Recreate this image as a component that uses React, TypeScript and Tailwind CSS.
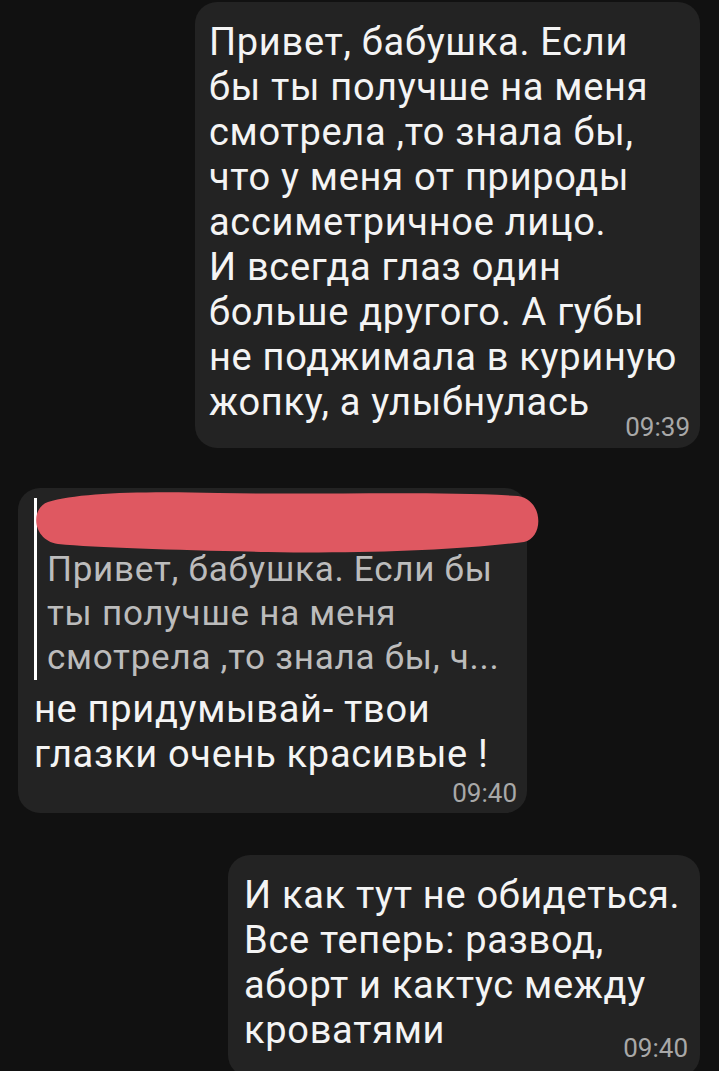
const Time = ({ value, className = "" }: { value: string; className?: string }) => (
  <div className={`flex justify-end ${className}`}>
    <span className="text-[26px] leading-[26px] text-[#a8a8a8]">{value}</span>
  </div>
);

const Lines = ({ lines, className }: { lines: string[]; className: string }) => (
  <div className={className}>
    {lines.map((l) => (
      <div key={l} className="whitespace-nowrap">
        {l}
      </div>
    ))}
  </div>
);

const App = () => {
  return (
    <div className="h-[1071px] overflow-hidden bg-[#111111] flex flex-col pt-[2px] font-['Roboto',sans-serif]">
      {/* outgoing message */}
      <div className="self-end mr-[19px] w-[505px] rounded-[22px] bg-[#232323] pl-[14px] pr-[10px] pt-[18px] pb-[8px]">
        <Lines
          className="text-[38px] leading-[45px] tracking-[0.7px] text-[#f4f4f4]"
          lines={[
            "Привет, бабушка. Если",
            "бы ты получше на меня",
            "смотрела ,то знала бы,",
            "что у меня от природы",
            "ассиметричное лицо.",
            "И всегда глаз один",
            "больше другого. А губы",
            "не поджимала в куриную",
            "жопку, а улыбнулась",
          ]}
        />
        <Time value="09:39" className="-mt-[11px]" />
      </div>

      {/* reply with quote */}
      <div className="relative mt-[40px] ml-[18px] w-[509px] rounded-[22px] bg-[#232323] pl-[16px] pr-[10px] pt-[10px] pb-[7px]">
        <div className="border-l-[3px] border-white pl-[10px]">
          <div className="h-[50px]" />
          <Lines
            className="text-[35px] leading-[44px] tracking-[0.75px] text-[#bcbcbc]"
            lines={["Привет, бабушка. Если бы", "ты получше на меня", "смотрела ,то знала бы, ч..."]}
          />
        </div>
        <Lines
          className="mt-[7px] text-[38px] leading-[45px] tracking-[0.7px] text-[#f4f4f4]"
          lines={["не придумывай- твои", "глазки очень красивые !"]}
        />
        <Time value="09:40" className="mt-[3px]" />

        {/* scribbled-out sender name */}
        <svg className="absolute left-0 top-0 overflow-visible" width="540" height="80" viewBox="0 0 540 80">
          <path
            d="M30 14 C60 5 120 3 200 5 C300 7 420 3 500 8 C526 12 526 50 506 54 C440 62 350 66 250 64 C160 62 80 60 40 56 C14 52 12 20 30 14 Z"
            fill="#df5861"
          />
        </svg>
      </div>

      {/* outgoing message */}
      <div className="self-end mt-[42px] mr-[19px] w-[472px] rounded-[22px] bg-[#232323] pl-[16px] pr-[12px] pt-[18px] pb-[16px]">
        <Lines
          className="text-[38px] leading-[45px] tracking-[0.7px] text-[#f4f4f4]"
          lines={["И как тут не обидеться.", "Все теперь: развод,", "аборт и кактус между", "кроватями"]}
        />
        <Time value="09:40" className="-mt-[18px]" />
      </div>
    </div>
  );
};

export default App;
